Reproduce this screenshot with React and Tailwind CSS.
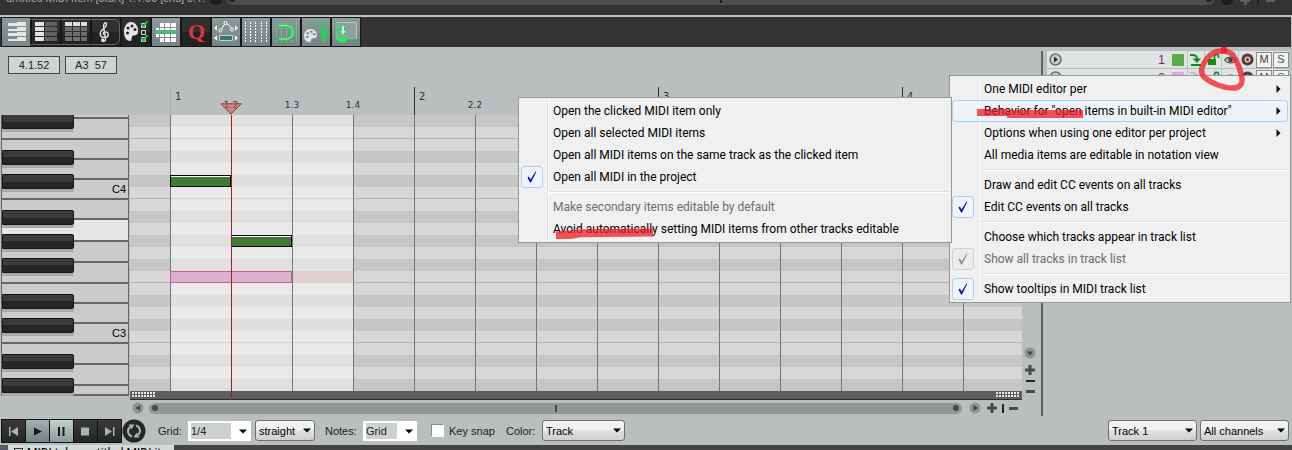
import React from "react";

const MENU_FONT = "font-['Roboto','Noto_Sans',sans-serif]";

/* ---------- small shared pieces ---------- */

function Plus({ className = "text-[#4a4a4a]" }) {
  return (
    <svg width="10" height="10" viewBox="0 0 10 10" className={className} aria-hidden="true">
      <path d="M3.5 0h3v3.5H10v3H6.5V10h-3V6.5H0v-3h3.5z" fill="currentColor" />
    </svg>
  );
}

function Arrow({ d, className = "" }) {
  return (
    <svg width="12" height="12" viewBox="0 0 12 12" className={className} aria-hidden="true">
      <circle cx="6" cy="6" r="5.6" fill="#8f9494" />
      <path d={d} fill="#444848" />
    </svg>
  );
}

function DropSelect({ label, value, className }) {
  return (
    <span className={"relative block h-[21px] " + className}>
      <select
        aria-label={label}
        defaultValue={value}
        className="block h-full w-full appearance-none rounded-[3px] border border-[#707070] bg-linear-to-b from-[#f2f2f2] from-50% via-[#e2e2e2] via-50% to-[#cfcfcf] pl-[3px] text-[11px] leading-4 text-black"
      >
        <option>{value}</option>
      </select>
      <svg width="8" height="5" viewBox="0 0 8 5" className="pointer-events-none absolute top-2 right-1" aria-hidden="true">
        <path d="M0 .5h8L4 4.5z" fill="#000" />
      </svg>
    </span>
  );
}

function Combo({ id, value, className }) {
  return (
    <span className={"relative flex h-5 items-center bg-white pl-[3px] pr-5 " + className}>
      <input id={id} defaultValue={value} className="block h-4 w-full min-w-0 bg-[#cfd1d1] text-[11px] leading-4 text-[#222]" />
      <svg width="8" height="5" viewBox="0 0 8 5" className="pointer-events-none absolute top-2 right-1" aria-hidden="true">
        <path d="M0 .5h8L4 4.5z" fill="#000" />
      </svg>
    </span>
  );
}

/* ---------- toolbar ---------- */

const Palette = ({ fill = "#e6e6e6", hole = "#232323", transform }) => (
  <g transform={transform}>
    <path d="M7 0C3 0 0 4.500 0 10c0 5 2.500 9 6 9 2.500 0 1-3.500 2.500-5 1.500-1.400 5 .5 5.500-4C14.500 4.500 11.500 0 7 0z" fill={fill} />
    <circle cx="4" cy="6" r="1.500" fill={hole} />
    <circle cx="8" cy="4" r="1.500" fill={hole} />
    <circle cx="3.500" cy="11" r="1.500" fill={hole} />
    <circle cx="11" cy="7.500" r="1.500" fill={hole} />
  </g>
);

const TOOLS = [
  {
    name: "Piano roll view",
    on: true,
    art: (
      <path
        d="M15 4h9v4H6V5h9zM15 9h9v4H6v-2h9zM15 14h9v4H6v-3h9zM15 19h9v4H6v-2h9z"
        fill="#e4e7e7"
      />
    ),
  },
  {
    name: "Named notes view",
    art: (
      <>
        <path d="M3 4h9v4H3zM3 9h9v4H3zM3 14h9v4H3zM3 19h9v4H3z" fill="#e4e4e4" />
        <path d="M13 4h12v4H13zM13 9h12v4H13zM13 14h12v4H13zM13 19h12v4H13z" fill="#606060" />
      </>
    ),
  },
  {
    name: "Event list view",
    art: (
      <>
        <path d="M3 4h7v4H3zM11 4h7v4h-7zM19 4h6v4h-6z" fill="#dcdcdc" />
        <path d="M3 9h7v4H3zM11 9h7v4h-7zM19 9h6v4h-6zM3 14h7v4H3zM11 14h7v4h-7zM19 14h6v4h-6zM3 19h7v4H3zM11 19h7v4h-7zM19 19h6v4h-6z" fill="#6e6e6e" />
      </>
    ),
  },
  {
    name: "Notation view",
    art: (
      <g fill="none" stroke="#dedede" strokeWidth="1.500" strokeLinecap="round">
        <path d="M10 22c0 2 3.800 2 3.500-.7L11.600 8.500c-.4-3.200 2.900-5.500 2.900-2 0 3.700-6.300 5-6.300 9.300 0 2.600 2.200 3.700 4.400 3.700 2.300 0 3.600-1.300 3.600-3 0-3.600-5-3.200-5-.2" />
        <circle cx="10.600" cy="22" r=".9" fill="#dedede" />
      </g>
    ),
  },
  {
    name: "Track colors and filter",
    art: (
      <>
        <Palette transform="translate(2 4)" />
        <path d="M19.500 5.500h4v4h-4zM19.500 12.500h4v4h-4zM19.500 19.500h4v4h-4z" fill="none" stroke="#ddd" />
        <path d="M19 5.500l2.500 3L25.500 3M19 19.500l2.500 3 4-5.500" fill="none" stroke="#17c94a" strokeWidth="1.800" />
      </>
    ),
  },
  {
    name: "Step input",
    on: true,
    art: (
      <>
        <path d="M8 5h4v4H8zM13 5h5v4h-5zM19 5h5v4h-5zM4 10h3v2H4zM8 10h4v2H8zM13 10h5v2h-5zM19 10h5v2h-5zM4 16h3v3H4zM8 16h4v3H8zM13 16h5v3h-5zM19 16h5v3h-5zM8 20h4v4H8zM13 20h5v4h-5zM19 20h5v4h-5z" fill="#fff" />
        <path d="M4 13h6v2H4zM11 13h7v2h-7zM19 13h5v2h-5z" fill="#1fe05a" />
      </>
    ),
  },
  {
    name: "Quantize",
    art: (
      <text x="14.500" y="21" textAnchor="middle" fontFamily="Liberation Serif, serif" fontWeight="700" fontSize="22" fill="#df3838">
        Q
      </text>
    ),
  },
  {
    name: "Envelope lane",
    on: true,
    art: (
      <>
        <path d="M2 10l3-2.500v5zM26 10l-3-2.500v5zM2 20l3-2.500v5zM26 20l-3-2.500v5z" fill="#fff" />
        <path d="M8.500 12.500L13 5.500l3.500 1 4 5" fill="none" stroke="#fff" />
        <g fill="#7e8b8b" stroke="#fff">
          <circle cx="8.500" cy="12.500" r="1.500" />
          <circle cx="13.500" cy="5" r="1.500" />
          <circle cx="20" cy="11.500" r="1.500" />
        </g>
        <path d="M7.500 17.500h13v5h-13z" fill="#2f7476" stroke="#c5cfcf" />
      </>
    ),
  },
  {
    name: "Show grid",
    on: true,
    art: <path d="M3.500 4v20M8.500 4v20M13.500 4v20M19.500 4v20M24.500 4v20" stroke="#fff" strokeDasharray="2 1" />,
  },
  {
    name: "Snap to grid",
    on: true,
    art: (
      <>
        <path d="M4.500 4v20" stroke="#2be866" strokeDasharray="2 1" />
        <path d="M9.500 4v20M14.500 4v20M19.500 4v20M24.500 4v20" stroke="#9caaa9" strokeDasharray="2 1" />
        <path d="M7 7.500h7c4 0 7 2.800 7 6.700s-3 6.800-7 6.800H7" fill="none" stroke="#12e04f" strokeWidth="3" />
        <path d="M7 7.500h7c4 0 7 2.800 7 6.700s-3 6.800-7 6.800H7" fill="none" stroke="#8df5ad" strokeWidth="1" />
      </>
    ),
  },
  {
    name: "Color by step",
    on: true,
    art: (
      <>
        <Palette fill="#dfe3e3" hole="#6f7b7b" transform="translate(2 11) scale(.92 .7)" />
        <path d="M18.500 12c.5-2.500 6-3 6.500.3.300 2.200-.8 3.500-1 5.700-.2 2.200.2 6-2 6-2.500 0-1.500-4-2-6-.4-2-2-3.500-1.500-6z" fill="#21d559" />
        <path d="M17 6v2.500M19.500 5v3M22 4.500v3M24.500 4v3.500" stroke="#21d559" strokeWidth="1.500" />
      </>
    ),
  },
  {
    name: "Insert at cursor",
    on: true,
    art: (
      <>
        <path d="M4.500 4.500h20v16h-20z" fill="#91a09f" stroke="#b9c4c3" />
        <path d="M4.500 4v16.500H25" fill="none" stroke="#2be866" strokeWidth="1.500" />
        <path d="M9.500 7.500h3v5h2L11 17.500l-3.500-5h2z" fill="#c9f7d7" stroke="#22dd5b" />
        <path d="M5 21h10c0 2-2 3.500-5 3.500S5 23 5 21z" fill="#2be866" />
      </>
    ),
  },
];

function ToolButton({ tool }) {
  return (
    <button
      type="button"
      aria-label={tool.name}
      className={
        "h-7 w-7 " +
        (tool.on ? "bg-linear-to-b from-[#8d9a9a] to-[#768484]" : "bg-linear-to-b from-[#303030] from-50% to-[#232323] to-50%")
      }
    >
      <svg width="28" height="28" viewBox="0 0 28 28" aria-hidden="true">
        {tool.art}
      </svg>
    </button>
  );
}

function Toolbar() {
  return (
    <div className="mr-px flex border-t-2 border-[#c0c4c4] bg-[#333]">
      <div className="ml-px flex gap-0.5 bg-[#161616] p-px">
        <div className="relative flex gap-0.5">
          {TOOLS.slice(0, 4).map((t) => (
            <ToolButton key={t.name} tool={t} />
          ))}
          <span className="pointer-events-none absolute inset-x-0 inset-y-px rounded-md border border-[#8a8a8a]/60" />
        </div>
        {TOOLS.slice(4).map((t) => (
          <ToolButton key={t.name} tool={t} />
        ))}
      </div>
    </div>
  );
}

/* ---------- top strip ---------- */

function TopStrip() {
  return (
    <div className="relative flex h-[15px] items-start overflow-hidden bg-[#333]">
      <div className={"flex h-[5px] w-[205px] shrink-0 items-end pl-1.5 text-[11px] leading-3 whitespace-nowrap text-[#a3a3a3] " + MENU_FONT}>
        untitled MIDI item [start] 1.1.00 [end] 5.1.
      </div>
      <div className="ml-[5px] h-[5px] w-3 rounded-b-full bg-[#1c1c1c]" />
      <div className="ml-[5px] flex h-[5px] flex-1 items-start justify-between rounded-b-md bg-[#4d4d4d] px-0.5">
        <i className="h-0.5 w-1.5 rounded-b-full bg-[#222]" />
        <i className="h-[3px] w-0.5 bg-[#1c1c1c]" />
        <i className="h-0.5 w-1.5 rounded-b-full bg-[#222]" />
      </div>
      <div className="flex h-[5px] w-[78px] shrink-0 items-start gap-[7px] pl-[7px]">
        <i className="h-[5px] w-3 rounded-b-full bg-[#1c1c1c]" />
        <i className="flex h-[5px] w-2.5 flex-col items-center">
          <i className="h-0.5 w-full bg-[#5e5e5e]" />
          <i className="h-[3px] w-[3px] bg-[#5e5e5e]" />
        </i>
        <i className="h-1 w-0.5 bg-[#1c1c1c]" />
        <i className="h-0.5 w-[9px] bg-[#5e5e5e]" />
      </div>
    </div>
  );
}

/* ---------- keyboard ---------- */

const WHITE_KEYS = [
  ["h-1"], ["h-[21px]"], ["h-5"], ["h-5"], ["h-5", "C4"], ["h-5"], ["h-[22px]", "", true], ["h-[21px]"],
  ["h-[21px]"], ["h-5"], ["h-5"], ["h-5", "C3"], ["h-[21px]"], ["h-[21px]"], ["h-2.5"],
];
// gap in front of each black key, from the top of the visible range
const BLACK_GAPS = ["-mt-px", "mt-[21px]", "mt-[9px]", "mt-[21px]", "mt-[9px]", "mt-[9px]", "mt-[21px]", "mt-[9px]", "mt-[21px]", "mt-[9px]"];

function Keyboard() {
  return (
    <div className="relative ml-px w-32 overflow-hidden border-x border-[#666]">
      {WHITE_KEYS.map(([h, label, lit], i) => (
        <div
          key={i}
          className={
            "flex items-center justify-end border-b-2 border-[#666] pr-0.5 text-[11px] leading-none text-black " + h + " " + (lit ? "bg-[#e6e6e6]" : "bg-[#cbcbcb]")
          }
        >
          {label}
        </div>
      ))}
      <div className="absolute top-0 left-0 w-[72px]">
        {BLACK_GAPS.map((gap, i) => (
          <div key={i} className={"h-[15px] rounded-r-xs border border-[#151515] bg-linear-to-b from-[#3b3b3b] from-50% to-[#262626] to-50% shadow-[0_3px_0_#a9a9a9] " + gap} />
        ))}
      </div>
    </div>
  );
}

/* ---------- note canvas ---------- */

// pitches from F#4 down to G#2
const PITCHES = ["F#4", "F4", "E4", "D#4", "D4", "C#4", "C4", "B3", "A#3", "A3", "G#3", "G3", "F#3", "F3", "E3", "D#3", "D3", "C#3", "C3", "B2", "A#2", "A2", "G#2"];
const BEATS = Array.from({ length: 14 }, (_, i) => ({ bar: Math.floor(i / 4) + 1, beat: (i % 4) + 1 }));
const BEAT_LABELS = ["1.2", "1.3", "1.4", "2.2"];

function Ruler() {
  return (
    <div className="relative flex h-7 overflow-hidden pl-10 font-['DejaVu_Sans',sans-serif] text-[#333]">
      {BEATS.map(({ bar, beat }, i) => {
        const label = bar + "." + beat;
        return (
          <div key={i} className={"w-[61px] shrink-0 " + (beat === 1 ? "border-l " + (i ? "border-[#333]" : "border-[#a8adad]") : "")}>
            {beat === 1 && <span className="block pt-1 pl-1 text-[10px] leading-3">{bar}</span>}
            {BEAT_LABELS.includes(label) && <span className="-ml-4 block w-8 pt-3 text-center text-[9px] leading-3">{label}</span>}
          </div>
        );
      })}
      <svg width="22" height="12" viewBox="0 0 22 12" className="absolute bottom-0 left-[90px]" aria-hidden="true">
        <path d="M1 .8h20L11 11z" fill="#c86464" fillOpacity=".55" stroke="#b02a2a" />
      </svg>
    </div>
  );
}

function Grip() {
  return (
    <svg width="24" height="6" viewBox="0 0 24 6" aria-hidden="true">
      <path d="M0 1h24M0 4h24" stroke="#e8e8e8" strokeWidth="2" strokeDasharray="2 1" />
    </svg>
  );
}

function Roll() {
  return (
    <div className="relative ml-px">
      <div className="relative overflow-hidden">
        {PITCHES.map((p) => (
          <div
            key={p}
            className={"h-3 " + (p.includes("#") ? "bg-[#c6c6c6]" : "bg-[#d7d7d7]") + (/^[FC]\d/.test(p) ? " border-b border-[#b3b3b3]" : "")}
          />
        ))}
        <div className="absolute inset-y-0 left-10 w-[183px] bg-white/45" />
        <div className="absolute inset-y-0 left-10 flex">
          {BEATS.map((b, i) => (
            <div key={i} className="w-[61px] shrink-0 border-l border-[#777]" />
          ))}
        </div>
        <div className="absolute top-[60px] left-10 h-3 w-[61px] border border-black bg-[#417a35] shadow-[inset_0_1px_0_#fff]" />
        <div className="absolute top-[120px] left-[101px] h-3 w-[61px] border border-black bg-[#417a35] shadow-[inset_0_1px_0_#fff]" />
        <div className="absolute top-[156px] left-10 h-3 w-[122px] border border-[#cc5c90] bg-[#dab2cc]" />
        <div className="absolute top-[156px] left-[163px] h-3 w-[60px] bg-[#e0cfcf]" />
      </div>
      <div className="flex h-[9px] items-center justify-between border-b border-[#2c2c2c] bg-[#5b5f5f] px-0.5">
        <Grip />
        <Grip />
      </div>
      <div className="absolute inset-y-0 left-[101px] w-px bg-[#a01f1f]" />
    </div>
  );
}

function HScroll() {
  return (
    <div className="flex h-4 items-center pl-0.5">
      <Arrow d="M8 3v6L3.500 6z" />
      <div className="ml-[5px] flex h-[11px] flex-1 items-center justify-between rounded-full bg-[#919696] px-[3px]">
        <i className="h-1.5 w-1.5 rounded-full bg-[#4a4a4a]" />
        <i className="h-[7px] w-0.5 bg-[#4a4a4a]" />
        <i className="h-1.5 w-1.5 rounded-full bg-[#4a4a4a]" />
      </div>
      <Arrow d="M4.500 3v6L9 6z" className="ml-[7px]" />
      <Plus className="ml-[6px] text-[#4a4a4a]" />
      <i className="ml-[5px] h-[9px] w-0.5 bg-[#222]" />
      <i className="mr-1 ml-[5px] h-[3px] w-[9px] bg-[#4a4a4a]" />
    </div>
  );
}

function VScroll() {
  return (
    <div className="flex w-[19px] shrink-0 flex-col items-center justify-end pr-[3px] pb-[23px]">
      <Arrow d="M3 4.500h6L6 9z" />
      <Plus className="mt-[6px] text-[#4a4a4a]" />
      <i className="mt-[5px] h-0.5 w-[9px] bg-[#222]" />
      <i className="mt-2 h-[3px] w-[9px] bg-[#4a4a4a]" />
    </div>
  );
}

/* ---------- track list ---------- */

function TrackRow({ n, color, armed }) {
  const cell = "flex h-[17px] w-[17px] shrink-0 items-center justify-center border-l border-[#bfc4c4]";
  const green = armed ? "#128a1e" : "#b9c0b9";
  return (
    <div className="mb-px flex h-[17px] items-center bg-[#dfe3e3] text-[12px] leading-4">
      <button type="button" aria-label={"Play track " + n} className="ml-[2px]">
        <svg width="13" height="13" viewBox="0 0 13 13" aria-hidden="true">
          <circle cx="6.500" cy="6.500" r="5.500" fill="#c9cfcf" stroke="#6b7070" strokeWidth="1.500" />
          <path d="M5 3.500v6l4-3z" fill="#2a2f2f" />
        </svg>
      </button>
      <span className="flex-1 pr-[7px] text-right text-[#7a1f5e]">{n}</span>
      <span className={"mr-[3px] h-3 w-3 " + color} />
      <button type="button" aria-label="Default track" className={cell}>
        <svg width="12" height="13" viewBox="0 0 12 13" aria-hidden="true">
          <path d="M0 2h2.500C5.500 2 7 3.500 7 6M1 12h10" fill="none" stroke={green} strokeWidth="2" />
          <path d="M2.500 5.500h8.500L7 10z" fill={green} />
        </svg>
      </button>
      <button type="button" aria-label="Editable" className={cell}>
        <svg width="13" height="13" viewBox="0 0 13 13" aria-hidden="true">
          <path d="M1 6h8v6H1z" fill="#128a1e" />
          <path d="M7.500 6V3.500c0-2.800 4-2.800 4 0V5" fill="none" stroke="#128a1e" strokeWidth="1.700" />
        </svg>
      </button>
      <button type="button" aria-label="Visible" className={cell}>
        <svg width="13" height="10" viewBox="0 0 13 10" aria-hidden="true">
          <path d="M.7 5C3 1.200 10 1.200 12.300 5 10 8.800 3 8.800.7 5z" fill="#c9d0d0" stroke="#555" strokeWidth="1.200" />
          <circle cx="6.500" cy="4.800" r="2.400" fill="#444" />
        </svg>
      </button>
      <button type="button" aria-label="Record arm" className={cell}>
        <svg width="13" height="13" viewBox="0 0 13 13" aria-hidden="true">
          <circle cx="6.500" cy="6.500" r="6" fill="#5a3634" />
          <circle cx="6.500" cy="6.500" r="2.300" fill="none" stroke="#dcd0ce" strokeWidth="1.500" />
        </svg>
      </button>
      {["M", "S"].map((l) => (
        <button
          key={l}
          type="button"
          aria-label={(l === "M" ? "Mute track " : "Solo track ") + n}
          className={"ml-px h-4 w-4 border border-[#8a8f8f] bg-[#f1f3f3] text-[11px] leading-none " + (l === "M" ? "text-[#5b2f2f]" : "text-[#4b5a22]")}
        >
          {l}
        </button>
      ))}
    </div>
  );
}

/* ---------- menus ---------- */

function Check({ dim }) {
  return (
    <span
      className={
        "flex h-[22px] w-[22px] items-center justify-center rounded-[3px] border " +
        (dim ? "border-[#d2d2d2] bg-[#ececec]" : "border-[#aed0f5] bg-[#eff4fa]")
      }
    >
      <svg width="10" height="12" viewBox="0 0 10 12" aria-hidden="true">
        <path d="M.5 6.500L2 5.500l1.600 3L8.500.5l.8.300L4 11.500H3z" fill={dim ? "#8c8c8c" : "#0c12a0"} />
      </svg>
    </span>
  );
}

function Menu({ items, label, className, children }) {
  return (
    <div role="menu" aria-label={label} className={"absolute border border-[#979797] bg-[#f0f0f0] p-0.5 " + MENU_FONT + " " + className}>
      <div className="absolute inset-y-0.5 left-7 w-0.5 border-l border-[#e2e3e3] bg-white" />
      {items.map((it, i) =>
        it === "-" ? (
          <div key={i} role="separator" className="flex h-2 items-center pl-7">
            <div className="h-0.5 w-full border-t border-[#e0e0e0] bg-white" />
          </div>
        ) : (
          <button
            key={i}
            type="button"
            role="menuitem"
            disabled={it.dim}
            className={
              "relative flex h-[22px] w-full items-center rounded-[3px] text-left text-[12px] leading-4 whitespace-nowrap " +
              (it.hot ? "bg-linear-to-b from-[#f1f4f9]/90 to-[#eaf0f8]/90 shadow-[inset_0_0_0_1px_#aecff7] " : "") +
              (it.dim ? "text-[#6d6d6d]" : "text-black")
            }
          >
            <span className="w-8 shrink-0">{it.check && <Check dim={it.dim} />}</span>
            <span className="flex-1">{it.text}</span>
            {it.sub && (
              <svg width="5" height="8" viewBox="0 0 5 8" className="mr-[7px]" aria-hidden="true">
                <path d="M.5 0v8l4-4z" fill="#111" />
              </svg>
            )}
          </button>
        )
      )}
      {children}
    </div>
  );
}

const MAIN_MENU = [
  { text: "One MIDI editor per", sub: true },
  { text: 'Behavior for "open items in built-in MIDI editor"', sub: true, hot: true },
  { text: "Options when using one editor per project", sub: true },
  { text: "All media items are editable in notation view" },
  "-",
  { text: "Draw and edit CC events on all tracks" },
  { text: "Edit CC events on all tracks", check: true },
  "-",
  { text: "Choose which tracks appear in track list" },
  { text: "Show all tracks in track list", check: true, dim: true },
  "-",
  { text: "Show tooltips in MIDI track list", check: true },
];

const SUB_MENU = [
  { text: "Open the clicked MIDI item only" },
  { text: "Open all selected MIDI items" },
  { text: "Open all MIDI items on the same track as the clicked item" },
  { text: "Open all MIDI in the project", check: true },
  "-",
  { text: "Make secondary items editable by default", dim: true },
  { text: "Avoid automatically setting MIDI items from other tracks editable" },
];

/* ---------- transport ---------- */

const TRANSPORT = [
  ["Go to start", "bg-linear-to-b from-[#3a3a3a] to-[#262626]", <path key="a" d="M7 8h1.500v9H7zM16 8v9l-7-4.500z" fill="#a9b3b3" />],
  ["Play", "bg-linear-to-b from-[#a3b0af] to-[#758483]", <path key="b" d="M8 8.500v8l8-4z" fill="#161616" />],
  ["Pause", "bg-linear-to-b from-[#c6d0cf] to-[#8d9b9a]", <path key="c" d="M8 8h2v9H8zM12.500 8h2v9h-2z" fill="#161616" />],
  ["Stop", "bg-linear-to-b from-[#3a3a3a] to-[#262626]", <path key="d" d="M7 8.500h8v8H7z" fill="#a9b3b3" />],
  ["Go to end", "bg-linear-to-b from-[#3a3a3a] to-[#262626]", <path key="e" d="M15 8h1.500v9H15zM7 8v9l7-4.500z" fill="#a9b3b3" />],
];

function BottomBar() {
  return (
    <div className="flex h-[29px] items-center text-[11px] leading-4 text-[#222]">
      <div className="ml-px flex gap-px bg-[#111] p-px">
        {TRANSPORT.map(([name, bg, art]) => (
          <button key={name} type="button" aria-label={name} className={"h-[22px] w-[23px] " + bg}>
            <svg width="23" height="22" viewBox="0 1 23 22" aria-hidden="true">
              {art}
            </svg>
          </button>
        ))}
      </div>
      <button type="button" aria-label="Repeat" className="w-6">
        <svg width="24" height="24" viewBox="0 0 24 24" aria-hidden="true">
          <circle cx="12" cy="12" r="11.500" fill="#262626" />
          <path d="M10 17.500A5.500 5.500 0 0 1 8 8M14 6.500A5.500 5.500 0 0 1 16 16" fill="none" stroke="#a9b3b3" strokeWidth="2" />
          <path d="M6.500 5.500h6l-3 5zM17.500 18.500h-6l3-5z" fill="#a9b3b3" />
        </svg>
      </button>
      <label htmlFor="grid" className="ml-3 w-[30px]">Grid:</label>
      <Combo id="grid" value="1/4" className="w-[63px]" />
      <DropSelect label="Grid type" value="straight" className="ml-1 w-[60px]" />
      <label htmlFor="notes" className="ml-2.5 w-[38px]">Notes:</label>
      <Combo id="notes" value="Grid" className="w-[54px]" />
      <input id="keysnap" type="checkbox" className="ml-3.5 h-[13px] w-[13px] appearance-none border border-[#8c8c8c] border-r-white border-b-white bg-white" />
      <label htmlFor="keysnap" className="ml-[5px] w-[57px] whitespace-nowrap">Key snap</label>
      <span className="w-9">Color:</span>
      <DropSelect label="Color" value="Track" className="w-[83px]" />
      <div className="ml-auto flex gap-[3px] pr-[3px]">
        <DropSelect label="Track" value="Track 1" className="w-[89px]" />
        <DropSelect label="Channel" value="All channels" className="w-[89px]" />
      </div>
    </div>
  );
}

/* ---------- page ---------- */

export default function App() {
  return (
    <main className="relative flex min-h-screen flex-col overflow-hidden bg-[#b9bebe] font-['Liberation_Sans',Arial,sans-serif]">
      <TopStrip />
      <Toolbar />

      <div className="flex">
        <div className="w-[129px] shrink-0">
          <div className="flex h-[68px] gap-[5px] pt-[9px] pl-2 text-[11px] leading-4 text-[#222]">
            <output className="h-[18px] w-[52px] border border-[#444] bg-[#d2d4d4] text-center">4.1.52</output>
            <output className="h-[18px] w-[52px] border border-[#444] bg-[#d2d4d4] text-center whitespace-pre">A3  57</output>
          </div>
          <Keyboard />
        </div>
        <div className="min-w-0 flex-1">
          <div className="flex h-[68px] flex-col justify-end">
            <div className="pl-px">
              <Ruler />
            </div>
          </div>
          <Roll />
          <div className="pl-px">
            <HScroll />
          </div>
        </div>
        <VScroll />
        <aside className="mt-1 w-[251px] shrink-0 border-l-2 border-[#5f6363] pr-[3px] pl-1">
          <TrackRow n="1" color="bg-[#5fa84c]" armed />
          <TrackRow n="2" color="bg-[#dba9cf]" />
        </aside>
      </div>

      <BottomBar />

      <div className={"flex h-[5px] overflow-hidden bg-[#444] text-[12px] text-black " + MENU_FONT}>
        <div className="flex h-[5px] w-[174px] items-start overflow-hidden bg-[#d3dada]">
          <i className="h-full w-2 shrink-0 bg-[#55596b]" />
          <i className="mt-[3px] ml-1.5 h-2 w-[9px] shrink-0 border border-[#333]" />
          <span className="shrink-0 pl-1 leading-4 whitespace-nowrap">MIDI take: untitled MIDI it</span>
        </div>
      </div>

      <Menu items={MAIN_MENU} label="Track list options" className="top-[75px] right-px w-[342px]">
        <svg width="108" height="12" viewBox="0 0 108 12" className="pointer-events-none absolute top-8 left-[27px]" aria-hidden="true">
          <path d="M0 1h30v1h76v8H30V8H0z" fill="#ee1c25" fillOpacity=".75" />
        </svg>
      </Menu>
      <Menu items={SUB_MENU} label="Open behavior" className="top-[97px] right-[340px] w-[434px]">
        <svg width="98" height="12" viewBox="0 0 98 12" className="pointer-events-none absolute bottom-[2px] left-[37px]" aria-hidden="true">
          <path d="M0 3.500L26 1.200 97 .5v8L25 9.200 14 11H0z" fill="#ee1c25" fillOpacity=".75" />
        </svg>
      </Menu>

      <svg width="56" height="48" viewBox="0 0 56 48" className="pointer-events-none absolute top-[46px] right-[42px]" aria-hidden="true">
        <path
          d="M27 5C20 5 14 10 10 17c-3 5-4 10 0 14 4 4 9 6 14 8 7 2.500 13 4 19 2.500 5-2 6-7 4.500-12C46 22 42 14 39 9c-3-3-7-4-12-4z"
          fill="none"
          stroke="#ee1c25"
          strokeOpacity=".75"
          strokeWidth="5.500"
          strokeLinejoin="round"
        />
        <path d="M27 1h6v6h-6z" fill="#ee1c25" fillOpacity=".8" />
      </svg>
    </main>
  );
}
